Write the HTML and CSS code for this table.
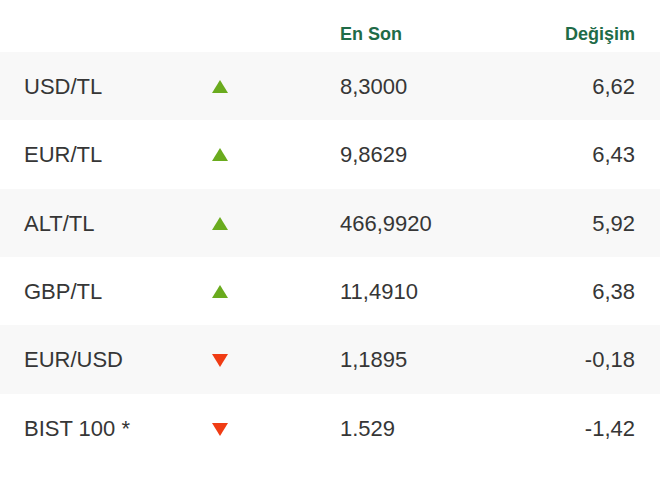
FILE: index.html
```html
<!DOCTYPE html>
<html lang="tr">
<head>
<meta charset="utf-8">
<link rel="stylesheet" href="styles.css">
</head>
<body>
<div class="table">
  <div class="head">
    <span></span>
    <span></span>
    <span class="h-last">En Son</span>
    <span class="h-chg">Değişim</span>
  </div>
  <div class="row alt">
    <span class="name">USD/TL</span>
    <span class="tri up"></span>
    <span class="val">8,3000</span>
    <span class="chg">6,62</span>
  </div>
  <div class="row">
    <span class="name">EUR/TL</span>
    <span class="tri up"></span>
    <span class="val">9,8629</span>
    <span class="chg">6,43</span>
  </div>
  <div class="row alt">
    <span class="name">ALT/TL</span>
    <span class="tri up"></span>
    <span class="val">466,9920</span>
    <span class="chg">5,92</span>
  </div>
  <div class="row">
    <span class="name">GBP/TL</span>
    <span class="tri up"></span>
    <span class="val">11,4910</span>
    <span class="chg">6,38</span>
  </div>
  <div class="row alt">
    <span class="name">EUR/USD</span>
    <span class="tri down"></span>
    <span class="val">1,1895</span>
    <span class="chg">-0,18</span>
  </div>
  <div class="row">
    <span class="name">BIST 100 *</span>
    <span class="tri down"></span>
    <span class="val">1.529</span>
    <span class="chg">-1,42</span>
  </div>
</div>
</body>
</html>
```
FILE: styles.css
```css
html, body {
  margin: 0;
  padding: 0;
  background: #ffffff;
}
body {
  font-family: "Liberation Sans", Arial, sans-serif;
  color: #363636;
  width: 660px;
  height: 484px;
  overflow: hidden;
}
.table {
  display: flex;
  flex-direction: column;
}
.head, .row {
  display: grid;
  grid-template-columns: 188px 128px 1fr auto;
  padding: 0 25px 0 24px;
  align-items: center;
}
.head {
  height: 52px;
  align-items: end;
  box-sizing: border-box;
  padding-bottom: 7px;
  font-size: 18px;
  line-height: 22px;
  font-weight: 700;
  color: #1f6b48;
}
.h-chg {
  text-align: right;
}
.row {
  height: 68.33px;
  box-sizing: border-box;
  padding-top: 2px;
  font-size: 22px;
  line-height: 26px;
}
.row.alt {
  background: #f8f8f8;
}
.chg {
  text-align: right;
}
.tri {
  width: 0;
  height: 0;
  border-left: 8px solid transparent;
  border-right: 8px solid transparent;
}
.tri.up {
  border-bottom: 13px solid #6aab1e;
  margin-top: -1px;
}
.tri.down {
  border-top: 13px solid #f03c14;
  margin-top: 1px;
}
```
